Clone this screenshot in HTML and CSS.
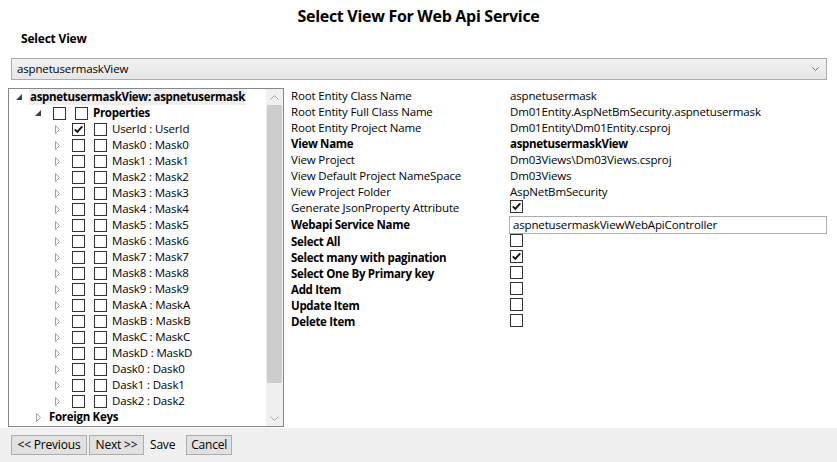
FILE: index.html
```html
<!DOCTYPE html>
<html>
<head>
<meta charset="utf-8">
<link rel="stylesheet" href="styles.css">
</head>
<body>
<div class="window">
  <h1 class="title">Select View For Web Api Service</h1>
  <div class="section-label">Select View</div>
  <div class="combo">
    <span class="combo-text">aspnetusermaskView</span>
    <svg class="combo-arrow" width="7" height="4" viewBox="0 0 7 4"><polyline points="0.5,0.5 3.5,3.5 6.5,0.5" fill="none" stroke="#707070" stroke-width="1"/></svg>
  </div>
  <div class="main">
    <div class="tree">
      <div class="tree-body">
        <div class="tree-row lvl0">
          <span class="exp"><svg width="6" height="6" viewBox="0 0 6 6"><polygon points="6,0 6,6 0,6" fill="#404040"/></svg></span>
          <span class="node-text bold selected">aspnetusermaskView: aspnetusermask</span>
        </div>
        <div class="tree-row lvl1">
          <span class="exp"><svg width="6" height="6" viewBox="0 0 6 6"><polygon points="6,0 6,6 0,6" fill="#404040"/></svg></span>
          <span class="cb"></span><span class="cb cb2"></span>
          <span class="node-text bold">Properties</span>
        </div>
        <div class="tree-row lvl2">
          <span class="exp"><svg width="5" height="9" viewBox="0 0 5 9"><polygon points="0.5,0.5 4.5,4.5 0.5,8.5" fill="#fff" stroke="#a0a0a0"/></svg></span>
          <span class="cb"><svg width="11" height="11" viewBox="0 0 11 11"><polyline points="1.8,5.3 4.3,7.8 9.3,2.3" fill="none" stroke="#111" stroke-width="1.9"/></svg></span><span class="cb cb2"></span>
          <span class="node-text">UserId : UserId</span>
        </div>
        <div class="tree-row lvl2"><span class="exp"><svg width="5" height="9" viewBox="0 0 5 9"><polygon points="0.5,0.5 4.5,4.5 0.5,8.5" fill="#fff" stroke="#a0a0a0"/></svg></span><span class="cb"></span><span class="cb cb2"></span><span class="node-text">Mask0 : Mask0</span></div>
        <div class="tree-row lvl2"><span class="exp"><svg width="5" height="9" viewBox="0 0 5 9"><polygon points="0.5,0.5 4.5,4.5 0.5,8.5" fill="#fff" stroke="#a0a0a0"/></svg></span><span class="cb"></span><span class="cb cb2"></span><span class="node-text">Mask1 : Mask1</span></div>
        <div class="tree-row lvl2"><span class="exp"><svg width="5" height="9" viewBox="0 0 5 9"><polygon points="0.5,0.5 4.5,4.5 0.5,8.5" fill="#fff" stroke="#a0a0a0"/></svg></span><span class="cb"></span><span class="cb cb2"></span><span class="node-text">Mask2 : Mask2</span></div>
        <div class="tree-row lvl2"><span class="exp"><svg width="5" height="9" viewBox="0 0 5 9"><polygon points="0.5,0.5 4.5,4.5 0.5,8.5" fill="#fff" stroke="#a0a0a0"/></svg></span><span class="cb"></span><span class="cb cb2"></span><span class="node-text">Mask3 : Mask3</span></div>
        <div class="tree-row lvl2"><span class="exp"><svg width="5" height="9" viewBox="0 0 5 9"><polygon points="0.5,0.5 4.5,4.5 0.5,8.5" fill="#fff" stroke="#a0a0a0"/></svg></span><span class="cb"></span><span class="cb cb2"></span><span class="node-text">Mask4 : Mask4</span></div>
        <div class="tree-row lvl2"><span class="exp"><svg width="5" height="9" viewBox="0 0 5 9"><polygon points="0.5,0.5 4.5,4.5 0.5,8.5" fill="#fff" stroke="#a0a0a0"/></svg></span><span class="cb"></span><span class="cb cb2"></span><span class="node-text">Mask5 : Mask5</span></div>
        <div class="tree-row lvl2"><span class="exp"><svg width="5" height="9" viewBox="0 0 5 9"><polygon points="0.5,0.5 4.5,4.5 0.5,8.5" fill="#fff" stroke="#a0a0a0"/></svg></span><span class="cb"></span><span class="cb cb2"></span><span class="node-text">Mask6 : Mask6</span></div>
        <div class="tree-row lvl2"><span class="exp"><svg width="5" height="9" viewBox="0 0 5 9"><polygon points="0.5,0.5 4.5,4.5 0.5,8.5" fill="#fff" stroke="#a0a0a0"/></svg></span><span class="cb"></span><span class="cb cb2"></span><span class="node-text">Mask7 : Mask7</span></div>
        <div class="tree-row lvl2"><span class="exp"><svg width="5" height="9" viewBox="0 0 5 9"><polygon points="0.5,0.5 4.5,4.5 0.5,8.5" fill="#fff" stroke="#a0a0a0"/></svg></span><span class="cb"></span><span class="cb cb2"></span><span class="node-text">Mask8 : Mask8</span></div>
        <div class="tree-row lvl2"><span class="exp"><svg width="5" height="9" viewBox="0 0 5 9"><polygon points="0.5,0.5 4.5,4.5 0.5,8.5" fill="#fff" stroke="#a0a0a0"/></svg></span><span class="cb"></span><span class="cb cb2"></span><span class="node-text">Mask9 : Mask9</span></div>
        <div class="tree-row lvl2"><span class="exp"><svg width="5" height="9" viewBox="0 0 5 9"><polygon points="0.5,0.5 4.5,4.5 0.5,8.5" fill="#fff" stroke="#a0a0a0"/></svg></span><span class="cb"></span><span class="cb cb2"></span><span class="node-text">MaskA : MaskA</span></div>
        <div class="tree-row lvl2"><span class="exp"><svg width="5" height="9" viewBox="0 0 5 9"><polygon points="0.5,0.5 4.5,4.5 0.5,8.5" fill="#fff" stroke="#a0a0a0"/></svg></span><span class="cb"></span><span class="cb cb2"></span><span class="node-text">MaskB : MaskB</span></div>
        <div class="tree-row lvl2"><span class="exp"><svg width="5" height="9" viewBox="0 0 5 9"><polygon points="0.5,0.5 4.5,4.5 0.5,8.5" fill="#fff" stroke="#a0a0a0"/></svg></span><span class="cb"></span><span class="cb cb2"></span><span class="node-text">MaskC : MaskC</span></div>
        <div class="tree-row lvl2"><span class="exp"><svg width="5" height="9" viewBox="0 0 5 9"><polygon points="0.5,0.5 4.5,4.5 0.5,8.5" fill="#fff" stroke="#a0a0a0"/></svg></span><span class="cb"></span><span class="cb cb2"></span><span class="node-text">MaskD : MaskD</span></div>
        <div class="tree-row lvl2"><span class="exp"><svg width="5" height="9" viewBox="0 0 5 9"><polygon points="0.5,0.5 4.5,4.5 0.5,8.5" fill="#fff" stroke="#a0a0a0"/></svg></span><span class="cb"></span><span class="cb cb2"></span><span class="node-text">Dask0 : Dask0</span></div>
        <div class="tree-row lvl2"><span class="exp"><svg width="5" height="9" viewBox="0 0 5 9"><polygon points="0.5,0.5 4.5,4.5 0.5,8.5" fill="#fff" stroke="#a0a0a0"/></svg></span><span class="cb"></span><span class="cb cb2"></span><span class="node-text">Dask1 : Dask1</span></div>
        <div class="tree-row lvl2"><span class="exp"><svg width="5" height="9" viewBox="0 0 5 9"><polygon points="0.5,0.5 4.5,4.5 0.5,8.5" fill="#fff" stroke="#a0a0a0"/></svg></span><span class="cb"></span><span class="cb cb2"></span><span class="node-text">Dask2 : Dask2</span></div>
        <div class="tree-row lvl1">
          <span class="exp"><svg width="5" height="9" viewBox="0 0 5 9"><polygon points="0.5,0.5 4.5,4.5 0.5,8.5" fill="#fff" stroke="#a0a0a0"/></svg></span>
          <span class="node-text bold fk">Foreign Keys</span>
        </div>
      </div>
      <div class="scrollbar">
        <div class="sb-btn"><svg width="9" height="5" viewBox="0 0 9 5"><polyline points="0.5,4.5 4.5,0.5 8.5,4.5" fill="none" stroke="#a3a3a3"/></svg></div>
        <div class="sb-track"><div class="sb-thumb"></div></div>
        <div class="sb-btn"><svg width="9" height="5" viewBox="0 0 9 5"><polyline points="0.5,0.5 4.5,4.5 8.5,0.5" fill="none" stroke="#a3a3a3"/></svg></div>
      </div>
    </div>
    <div class="form">
      <div class="f-label">Root Entity Class Name</div><div class="f-value">aspnetusermask</div>
      <div class="f-label">Root Entity Full Class Name</div><div class="f-value">Dm01Entity.AspNetBmSecurity.aspnetusermask</div>
      <div class="f-label">Root Entity Project Name</div><div class="f-value">Dm01Entity\Dm01Entity.csproj</div>
      <div class="f-label bold">View Name</div><div class="f-value bold">aspnetusermaskView</div>
      <div class="f-label">View Project</div><div class="f-value">Dm03Views\Dm03Views.csproj</div>
      <div class="f-label">View Default Project NameSpace</div><div class="f-value">Dm03Views</div>
      <div class="f-label">View Project Folder</div><div class="f-value">AspNetBmSecurity</div>
      <div class="f-label">Generate JsonProperty Attribute</div><div class="f-value"><span class="cb form-cb"><svg width="11" height="11" viewBox="0 0 11 11"><polyline points="1.8,5.3 4.3,7.8 9.3,2.3" fill="none" stroke="#111" stroke-width="1.9"/></svg></span></div>
      <div class="f-label bold tall">Webapi Service Name</div><div class="f-value tall"><div class="textbox">aspnetusermaskViewWebApiController</div></div>
      <div class="f-label bold">Select All</div><div class="f-value"><span class="cb form-cb"></span></div>
      <div class="f-label bold">Select many with pagination</div><div class="f-value"><span class="cb form-cb"><svg width="11" height="11" viewBox="0 0 11 11"><polyline points="1.8,5.3 4.3,7.8 9.3,2.3" fill="none" stroke="#111" stroke-width="1.9"/></svg></span></div>
      <div class="f-label bold">Select One By Primary key</div><div class="f-value"><span class="cb form-cb"></span></div>
      <div class="f-label bold">Add Item</div><div class="f-value"><span class="cb form-cb"></span></div>
      <div class="f-label bold">Update Item</div><div class="f-value"><span class="cb form-cb"></span></div>
      <div class="f-label bold">Delete Item</div><div class="f-value"><span class="cb form-cb"></span></div>
    </div>
  </div>
  <div class="footer">
    <button class="btn btn-prev">&lt;&lt; Previous</button>
    <button class="btn btn-next">Next &gt;&gt;</button>
    <span class="save">Save</span>
    <button class="btn btn-cancel">Cancel</button>
  </div>
</div>
</body>
</html>
```
FILE: styles.css
```css
* { box-sizing: border-box; }
html, body { margin: 0; padding: 0; }
body {
  width: 837px;
  height: 462px;
  overflow: hidden;
  background: #fff;
  font-family: "Open Sans", "Noto Sans", "Liberation Sans", sans-serif;
  font-size: 11.5px;
  letter-spacing: -0.15px;
  color: #000;
}
.window {
  display: flex;
  flex-direction: column;
  height: 462px;
}
.title {
  margin: 0;
  height: 31px;
  line-height: 32px;
  font-size: 16px;
  font-weight: 700;
  text-align: center;
  letter-spacing: -0.3px;
}
.section-label {
  margin-left: 21px;
  height: 16px;
  line-height: 16px;
  font-weight: 700;
  font-size: 12px;
  letter-spacing: -0.2px;
}
.combo {
  margin: 11px 10px 0 11px;
  height: 22px;
  border: 1px solid #acacac;
  background: linear-gradient(#f2f2f2, #e6e6e6);
  display: flex;
  align-items: center;
  justify-content: space-between;
  padding: 0 7px 0 5px;
}
.combo-text { line-height: 18px; }
.main {
  margin-top: 8px;
  height: 340px;
  display: flex;
  align-items: flex-start;
}
.tree {
  margin-left: 8px;
  width: 276px;
  height: 339px;
  border: 1px solid #828790;
  display: flex;
}
.tree-body {
  flex: 1;
  overflow: hidden;
}
.tree-row {
  height: 16px;
  display: flex;
  align-items: center;
  white-space: nowrap;
}
.lvl0 { padding-left: 2px; }
.lvl1 { padding-left: 21px; }
.lvl2 { padding-left: 40px; }
.exp {
  width: 16px;
  height: 16px;
  display: flex;
  align-items: center;
  justify-content: center;
  flex: none;
}
.node-text {
  line-height: 16px;
  margin-left: 5px;
}
.tree-row .cb { margin-left: 7px; }
.tree-row .cb2 { margin-left: 9px; }
.tree-row.lvl0 .node-text { margin-left: 2px; }
.selected {
  background: #efefef;
  padding: 0 1px 0 1px;
}
.fk { margin-left: 3px; }
.bold { font-weight: 700; letter-spacing: -0.3px; }
.cb {
  width: 13px;
  height: 13px;
  border: 1px solid #333;
  background: #fff;
  display: inline-flex;
  align-items: center;
  justify-content: center;
  flex: none;
}
.cb svg { display: block; }
.scrollbar {
  width: 17px;
  flex: none;
  background: #f0f0f0;
  display: flex;
  flex-direction: column;
}
.sb-btn {
  height: 16px;
  display: flex;
  align-items: center;
  justify-content: center;
  flex: none;
}
.sb-track { flex: 1; }
.sb-thumb {
  margin: 0 1px;
  height: 278px;
  background: #cdcdcd;
}
.form {
  margin-left: 7px;
  display: grid;
  grid-template-columns: 218px 318px;
  grid-template-rows: repeat(8, 16px) 18px repeat(6, 16px);
}
.f-label, .f-value {
  line-height: 16px;
  white-space: nowrap;
}
.f-value { padding-left: 1px; }
.tall { height: 18px; }
.form > .f-label.tall { line-height: 18px; }
.textbox {
  margin-left: -1px;
  height: 18px;
  border: 1px solid #abadb3;
  line-height: 16px;
  padding-left: 3px;
  background: #fff;
}
.f-value .form-cb { display: flex; }
.footer {
  flex: 1;
  background: #f0f0f0;
  display: flex;
  align-items: flex-start;
  padding: 7px 0 0 11px;
}
.btn {
  font-family: inherit;
  font-size: 12px;
  height: 20px;
  padding: 0;
  background: #e1e1e1;
  border: 1px solid #adadad;
  color: #000;
  letter-spacing: -0.2px;
  line-height: 18px;
}
.btn-prev { width: 76px; }
.btn-next { width: 55px; margin-left: 2px; }
.save { margin-left: 6px; line-height: 20px; font-size: 12px; letter-spacing: -0.2px; }
.btn-cancel { width: 46px; margin-left: 11px; }
```
